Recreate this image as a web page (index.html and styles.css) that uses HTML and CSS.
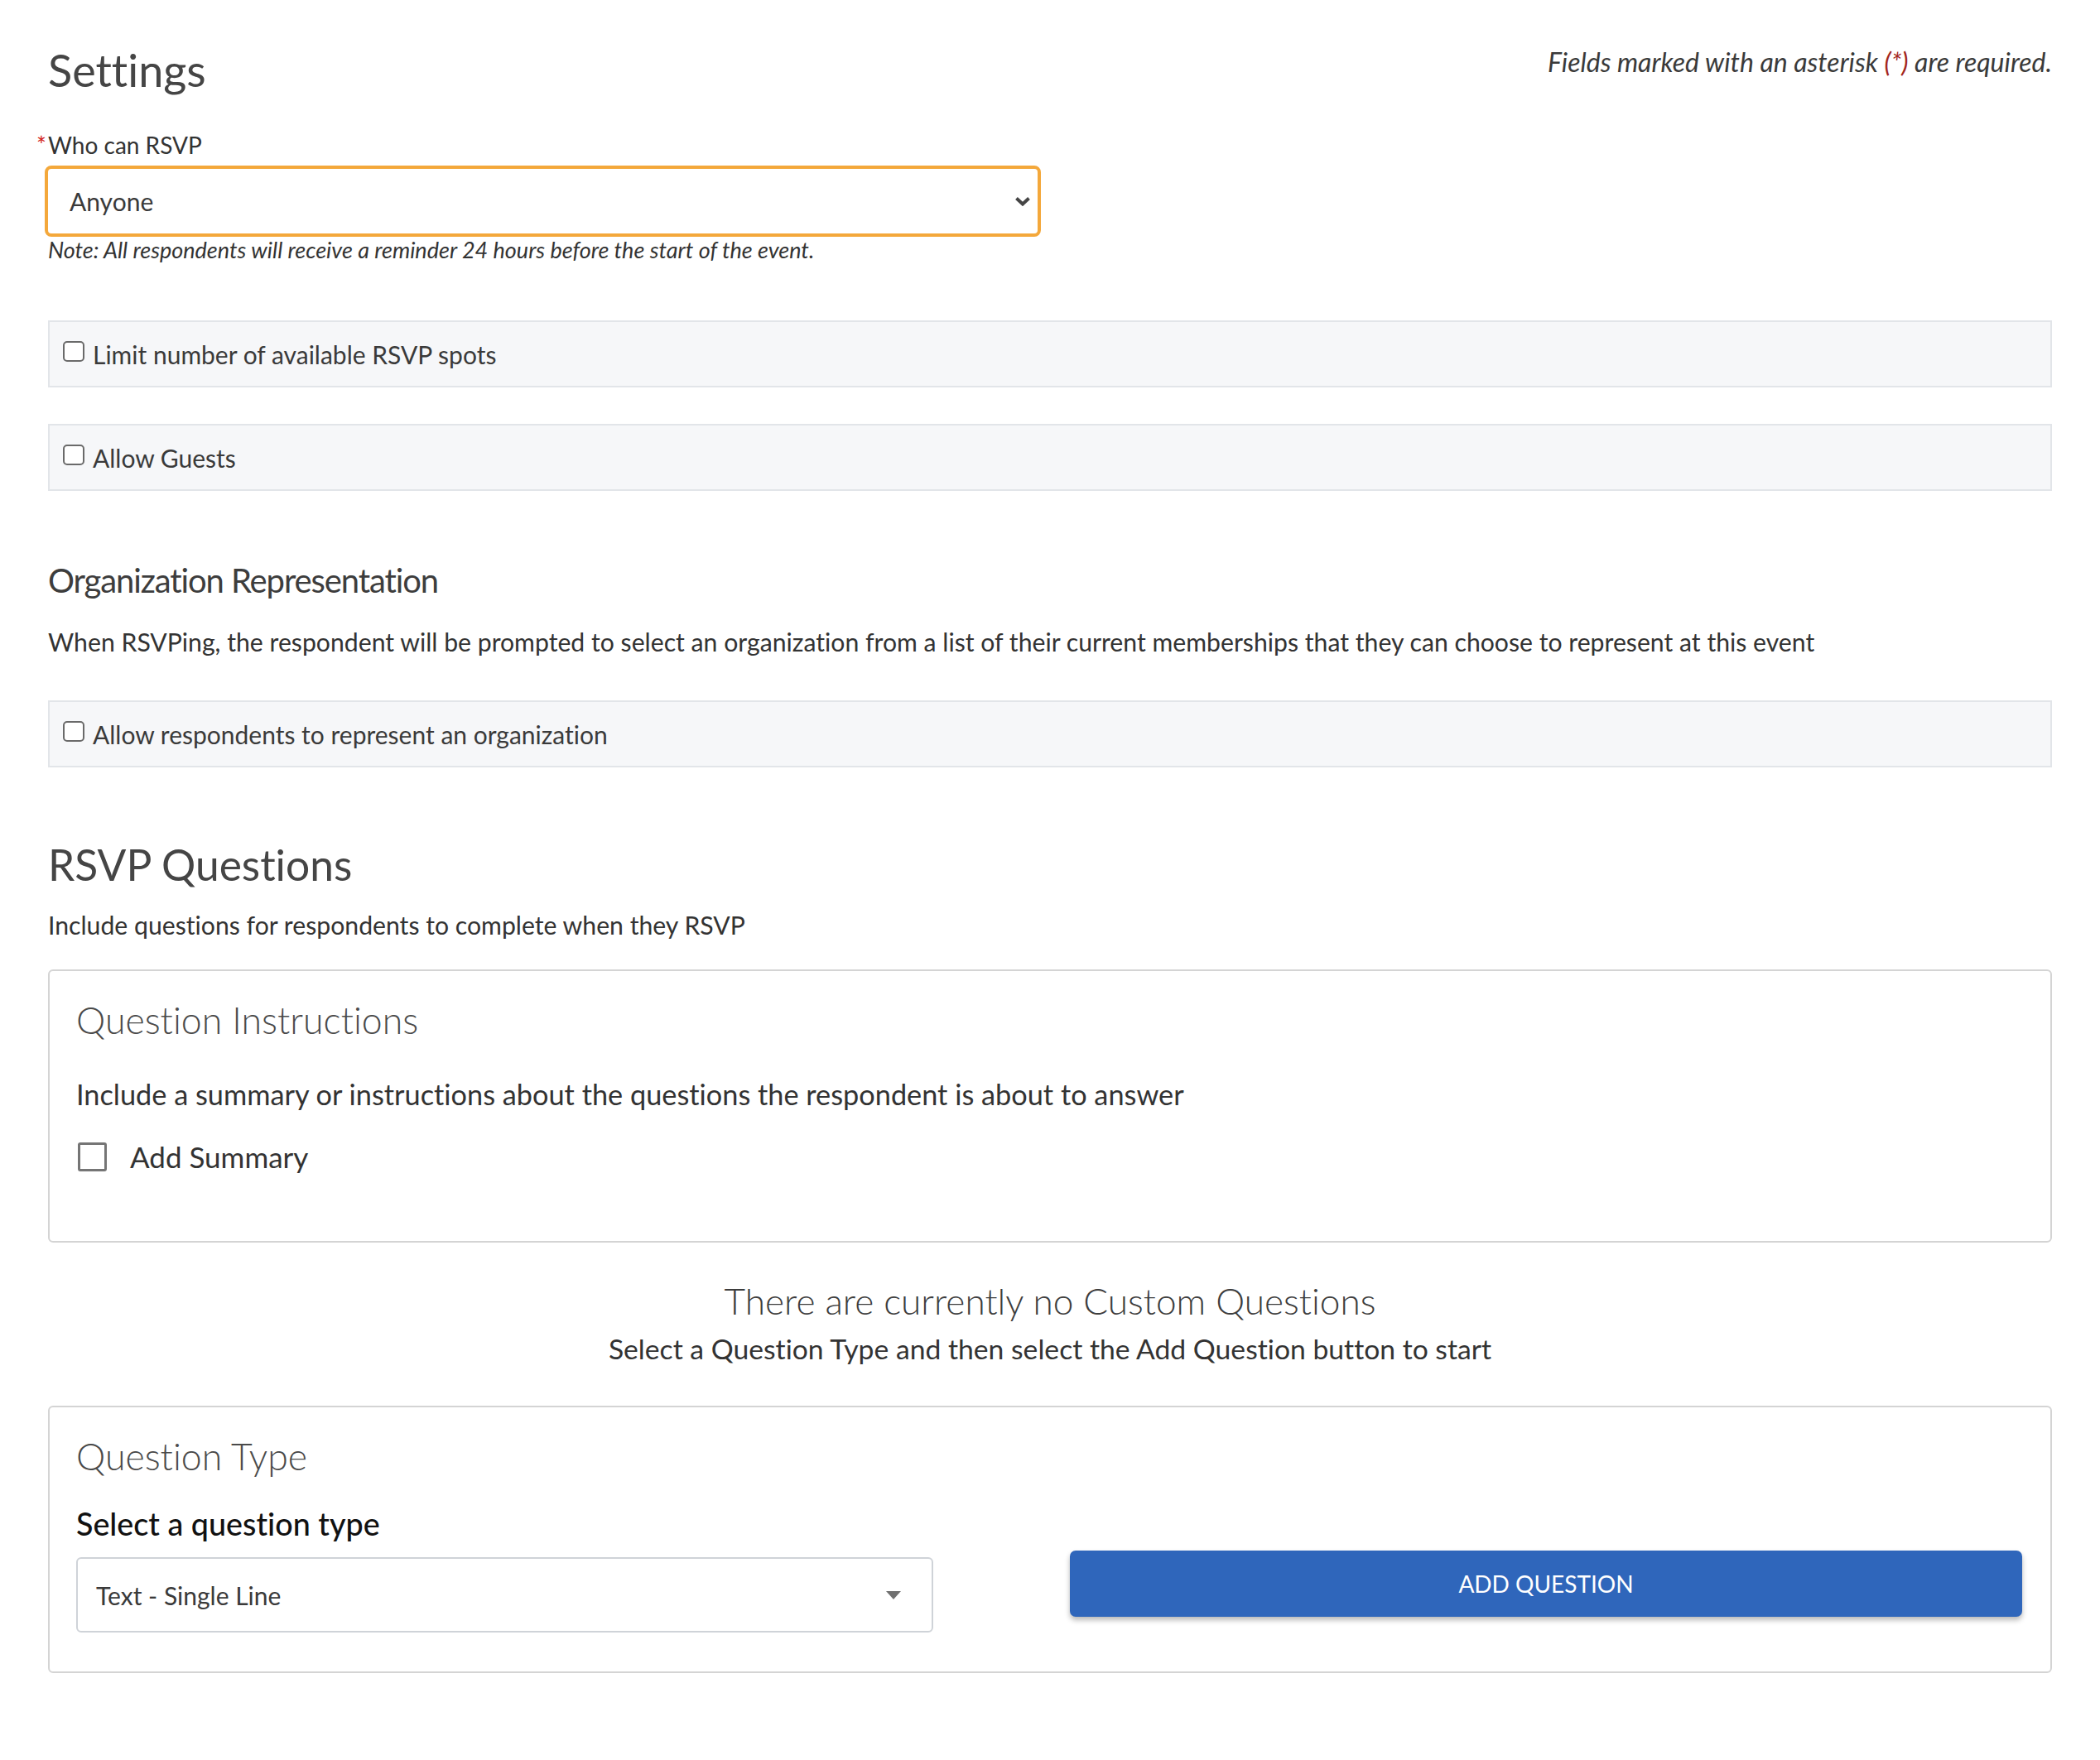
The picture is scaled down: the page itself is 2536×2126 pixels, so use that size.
FILE: index.html
```html
<!DOCTYPE html>
<html lang="en">
<head>
<meta charset="utf-8">
<title>RSVP Settings</title>
<link rel="stylesheet" href="styles.css">
</head>
<body>
<main class="page">
  <header class="settings-head">
    <h1 class="title">Settings</h1>
    <p class="req-note">Fields marked with an asterisk <span class="req-mark">(*)</span> are required.</p>
  </header>

  <div class="field">
    <label class="field-label"><span class="asterisk">*</span>Who can RSVP</label>
    <div class="select select-focus">
      <span class="select-value">Anyone</span>
      <svg class="chevron" width="20" height="12" viewBox="0 0 20 12"><path d="M2.5 2.5 L10 9.5 L17.5 2.5" fill="none" stroke="#454545" stroke-width="4"/></svg>
    </div>
    <p class="hint">Note: All respondents will receive a reminder 24 hours before the start of the event.</p>
  </div>

  <label class="option-panel panel-first"><span class="cb"></span><span>Limit number of available RSVP spots</span></label>
  <label class="option-panel panel-second"><span class="cb"></span><span>Allow Guests</span></label>

  <h2 class="subhead">Organization Representation</h2>
  <p class="text text-org">When RSVPing, the respondent will be prompted to select an organization from a list of their current memberships that they can choose to represent at this event</p>

  <label class="option-panel panel-org"><span class="cb"></span><span>Allow respondents to represent an organization</span></label>

  <h1 class="title title-questions">RSVP Questions</h1>
  <p class="text text-questions">Include questions for respondents to complete when they RSVP</p>

  <section class="card card-instructions">
    <h3 class="card-title">Question Instructions</h3>
    <p class="card-text">Include a summary or instructions about the questions the respondent is about to answer</p>
    <label class="check-row"><span class="cb cb-large"></span><span>Add Summary</span></label>
  </section>

  <div class="empty">
    <p class="empty-title">There are currently no Custom Questions</p>
    <p class="empty-sub">Select a Question Type and then select the Add Question button to start</p>
  </div>

  <section class="card card-type">
    <h3 class="card-title">Question Type</h3>
    <div class="type-grid">
      <label class="type-label">Select a question type</label>
      <div class="select select-plain">
        <span class="select-value">Text - Single Line</span>
        <svg class="caret" width="18" height="10" viewBox="0 0 18 10"><polygon points="0,0 18,0 9,10" fill="#707070"/></svg>
      </div>
      <button class="btn-primary" type="button">ADD QUESTION</button>
    </div>
  </section>
</main>
</body>
</html>
```

FILE: styles.css
```css
* { box-sizing: border-box; }

html, body {
  margin: 0;
  padding: 0;
  background: #ffffff;
}

body {
  font-family: Lato, "Noto Sans", sans-serif;
  font-variant-ligatures: no-common-ligatures;
  color: #333333;
  font-size: 30px;
  line-height: 40px;
}

.page {
  padding: 51px 58px 120px 58px;
}

p, h1, h2, h3 { margin: 0; }

.settings-head {
  display: flex;
  justify-content: space-between;
  align-items: flex-start;
}

.title {
  font-size: 54px;
  line-height: 68px;
  font-weight: 400;
  color: #454545;
}

.req-note {
  margin-top: 4px;
  font-style: italic;
  font-size: 32px;
  line-height: 40px;
  color: #3a3a3a;
}

.req-mark { color: #a3261b; }

.field-label {
  display: block;
  margin-top: 36px;
  margin-left: -14px;
  font-size: 28px;
  line-height: 40px;
  color: #333;
}

.asterisk {
  display: inline-block;
  width: 14px;
  color: #d3241b;
  font-size: 28px;
}

.select {
  display: flex;
  align-items: center;
  justify-content: space-between;
  background: #fff;
}

.select-focus {
  margin-top: 5px;
  margin-left: -4px;
  width: 1203px;
  height: 86px;
  border: 4px solid #f4a83b;
  border-radius: 8px;
  padding: 0 8px 0 26px;
  color: #3a3a3a;
}

.select-value {
  font-size: 30px;
  line-height: 40px;
}

.hint {
  font-style: italic;
  font-size: 27px;
  line-height: 32px;
  color: #333;
}

.option-panel {
  display: flex;
  align-items: center;
  gap: 10px;
  height: 81px;
  padding: 0 16px;
  background: #f6f7f9;
  border: 2px solid #e2e5e9;
  font-size: 30px;
  line-height: 40px;
  color: #3a3a3a;
}

.panel-first { margin-top: 69px; }
.panel-second { margin-top: 44px; }
.panel-org { margin-top: 51px; }

.cb {
  display: inline-block;
  flex: none;
  width: 26px;
  height: 25px;
  margin-bottom: 6px;
  border: 2px solid #6a6a6a;
  border-radius: 5px;
  background: #fff;
}

.subhead {
  margin-top: 82px;
  font-size: 40px;
  line-height: 52px;
  font-weight: 400;
  letter-spacing: -1.1px;
  color: #3d3d3d;
}

.text {
  font-size: 30.2px;
  line-height: 40px;
  color: #333;
}

.text-org { margin-top: 28px; }

.title-questions {
  margin-top: 85px;
  font-size: 51.5px;
  line-height: 64px;
}

.text-questions { margin-top: 21px; }

.card {
  border: 2px solid #d4d4d4;
  border-radius: 6px;
  background: #fff;
  padding: 31px 34px 0 32px;
}

.card-instructions {
  margin-top: 34px;
  padding-bottom: 80px;
}

.card-title {
  font-size: 44.6px;
  line-height: 56px;
  font-weight: 300;
  color: #4a4a4a;
}

.card-text {
  margin-top: 40px;
  font-size: 34.3px;
  line-height: 44px;
  color: #333;
}

.check-row {
  display: flex;
  align-items: center;
  gap: 28px;
  margin-top: 31px;
  height: 44px;
  font-size: 35px;
  line-height: 44px;
  color: #333;
}

.cb-large {
  width: 35px;
  height: 35px;
  margin-left: 2px;
  margin-bottom: 0;
  border: 3px solid #757575;
  border-radius: 3px;
}

.empty {
  margin-top: 42px;
  text-align: center;
}

.empty-title {
  font-size: 44.2px;
  line-height: 56px;
  font-weight: 300;
  color: #3d3d3d;
}

.empty-sub {
  margin-top: 8px;
  font-size: 33.7px;
  line-height: 44px;
  color: #333;
}

.card-type {
  margin-top: 47px;
  padding-bottom: 47px;
}

.type-grid {
  display: grid;
  grid-template-columns: 1035px 1150px;
  justify-content: space-between;
  align-items: start;
  row-gap: 10px;
  margin-top: 32px;
}

.type-label {
  grid-column: 1;
  grid-row: 1;
  font-size: 37.7px;
  line-height: 44px;
  font-weight: 500;
  color: #111;
}

.select-plain {
  grid-column: 1;
  grid-row: 2;
  margin-top: 8px;
  height: 91px;
  border: 2px solid #cfd3d8;
  border-radius: 6px;
  padding: 0 37px 0 22px;
  color: #3a3a3a;
}

.btn-primary {
  grid-column: 2;
  grid-row: 2;
  height: 80px;
  border: none;
  border-radius: 7px;
  background: #2f66bb;
  color: #fff;
  font-family: Lato, "Noto Sans", sans-serif;
  font-size: 28px;
  line-height: 40px;
  box-shadow: 0 4px 6px rgba(0, 0, 0, 0.28);
  cursor: pointer;
}
```
